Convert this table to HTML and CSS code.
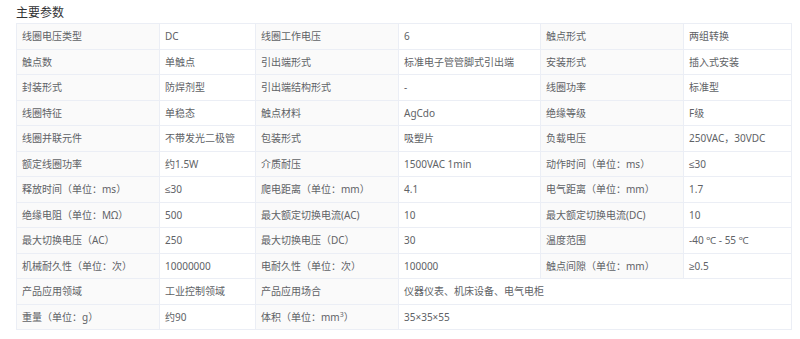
FILE: index.html
```html
<!DOCTYPE html>
<html lang="zh-CN">
<head>
  <meta charset="UTF-8" />
  <meta name="viewport" content="width=device-width, initial-scale=1.0" />
  <title>主要参数</title>
  <link rel="stylesheet" href="styles.css">
</head>
<body>
  <section class="params">
    <h3 class="params-title">主要参数</h3>
    <table class="params-table">
      <colgroup>
        <col class="c-label">
        <col class="c-value-sm">
        <col class="c-label">
        <col class="c-value">
        <col class="c-label">
        <col class="c-value-end">
      </colgroup>
      <tbody>
        <tr>
          <th>线圈电压类型</th><td>DC</td>
          <th>线圈工作电压</th><td>6</td>
          <th>触点形式</th><td>两组转换</td>
        </tr>
        <tr>
          <th>触点数</th><td>单触点</td>
          <th>引出端形式</th><td>标准电子管管脚式引出端</td>
          <th>安装形式</th><td>插入式安装</td>
        </tr>
        <tr>
          <th>封装形式</th><td>防焊剂型</td>
          <th>引出端结构形式</th><td>-</td>
          <th>线圈功率</th><td>标准型</td>
        </tr>
        <tr>
          <th>线圈特征</th><td>单稳态</td>
          <th>触点材料</th><td>AgCdo</td>
          <th>绝缘等级</th><td>F级</td>
        </tr>
        <tr>
          <th>线圈并联元件</th><td>不带发光二极管</td>
          <th>包装形式</th><td>吸塑片</td>
          <th>负载电压</th><td>250VAC，30VDC</td>
        </tr>
        <tr>
          <th>额定线圈功率</th><td>约1.5W</td>
          <th>介质耐压</th><td>1500VAC 1min</td>
          <th>动作时间（单位：ms）</th><td>≤30</td>
        </tr>
        <tr>
          <th>释放时间（单位：ms）</th><td>≤30</td>
          <th>爬电距离（单位：mm）</th><td>4.1</td>
          <th>电气距离（单位：mm）</th><td>1.7</td>
        </tr>
        <tr>
          <th>绝缘电阻（单位：MΩ）</th><td>500</td>
          <th>最大额定切换电流(AC)</th><td>10</td>
          <th>最大额定切换电流(DC)</th><td>10</td>
        </tr>
        <tr>
          <th>最大切换电压（AC）</th><td>250</td>
          <th>最大切换电压（DC）</th><td>30</td>
          <th>温度范围</th><td>-40 ℃ - 55 ℃</td>
        </tr>
        <tr>
          <th>机械耐久性（单位：次）</th><td>10000000</td>
          <th>电耐久性（单位：次）</th><td>100000</td>
          <th>触点间隙（单位：mm）</th><td>≥0.5</td>
        </tr>
        <tr>
          <th>产品应用领域</th><td>工业控制领域</td>
          <th>产品应用场合</th><td colspan="3">仪器仪表、机床设备、电气电柜</td>
        </tr>
        <tr>
          <th>重量（单位：g）</th><td>约90</td>
          <th>体积（单位：mm<sup>3</sup>）</th><td colspan="3">35×35×55</td>
        </tr>
      </tbody>
    </table>
  </section>
</body>
</html>
```

FILE: styles.css
```css
:root {
  --text: #606266;
  --title: #303133;
  --border: #ebeef5;
  --label-bg: #fafafa;
}

body {
  margin: 0;
  background: #ffffff;
  font-family: "Noto Sans", "Liberation Sans", "Noto Sans CJK SC", sans-serif;
  color: var(--text);
}

.params {
  padding: 5px 9px 0 16px;
}

.params-title {
  margin: 0 0 3px;
  font-size: 12px;
  line-height: 15px;
  font-weight: 400;
  color: var(--title);
}

.params-table {
  width: 775px;
  table-layout: fixed;
  border-collapse: collapse;
  font-size: 10px;
}

.c-label { width: 143px; }
.c-value-sm { width: 96px; }
.c-value { width: 142px; }
.c-value-end { width: 108px; }

.params-table th,
.params-table td {
  border: 1px solid var(--border);
  padding: 4px 5px;
  line-height: 16.5px;
  text-align: left;
  font-weight: 400;
  white-space: nowrap;
  overflow: hidden;
}

.params-table th {
  background: var(--label-bg);
}

.params-table sup {
  font-size: 7px;
  line-height: 0;
}
```
